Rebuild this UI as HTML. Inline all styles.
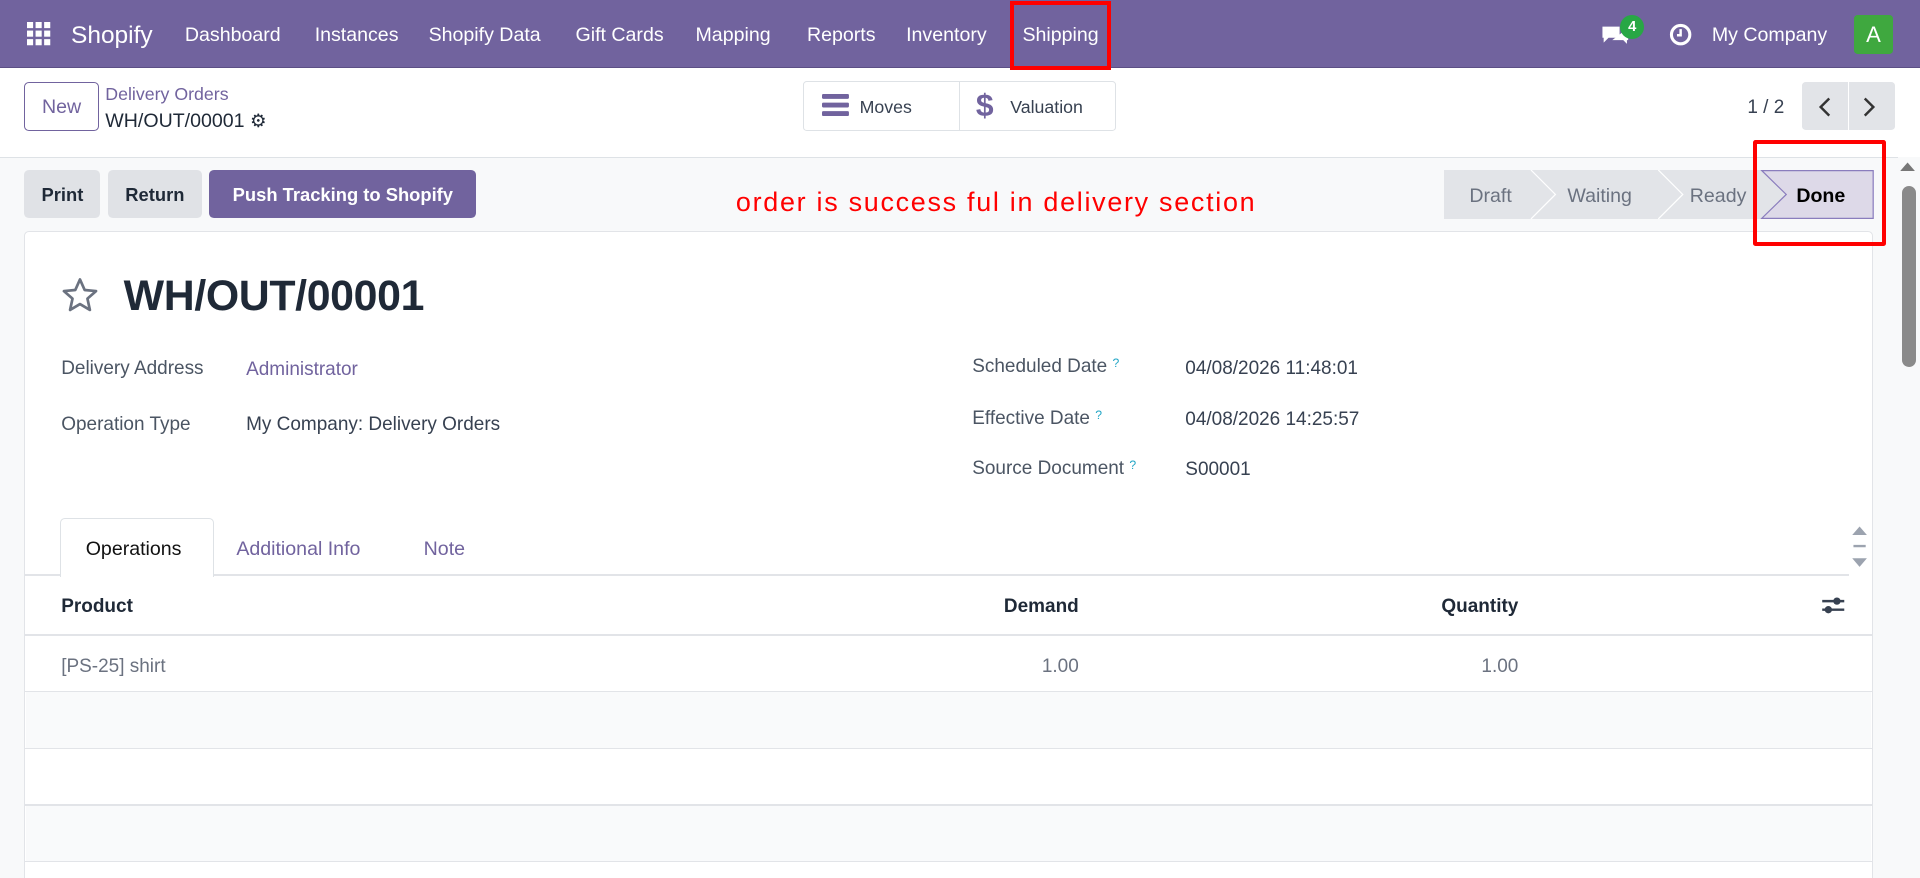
<!DOCTYPE html>
<html><head><meta charset="utf-8"><style>
html,body{margin:0;padding:0;width:1920px;height:878px;overflow:hidden;background:#fff}
#w{zoom:1.22449;width:1568px;height:717px;position:relative;font-family:"Liberation Sans",sans-serif;color:#374151;font-size:14.5px;overflow:hidden}
.a{position:absolute;white-space:nowrap}
.nav{left:0;top:0;width:1568px;height:55px;background:#71639e;border-bottom:1px solid #5c4f85}
.nv{color:#fff;font-size:16px;top:20px}
.btn{position:absolute;top:139px;height:39px;line-height:41px;border-radius:4px;background:#e0e2e6;color:#1f2937;font-weight:bold;font-size:15px;text-align:center}
.lbl{font-size:15.5px;color:#4b5563}
.val{font-size:15.5px;color:#374151}
.q{color:#22a6c6;font-size:10px;vertical-align:top}
.hr{position:absolute;left:20px;width:1509px;height:1px;background:#e2e4e8}
</style></head><body><div id="w">
<div class="a nav"></div>
<svg class="a" style="left:22px;top:18px" width="20" height="20"><g fill="#fff"><rect x="0" y="0" width="5" height="5"/><rect x="7" y="0" width="5" height="5"/><rect x="14" y="0" width="5" height="5"/><rect x="0" y="7" width="5" height="5"/><rect x="7" y="7" width="5" height="5"/><rect x="14" y="7" width="5" height="5"/><rect x="0" y="14" width="5" height="5"/><rect x="7" y="14" width="5" height="5"/><rect x="14" y="14" width="5" height="5"/></g></svg>
<div class="a" style="left:58px;top:18px;color:#fff;font-size:20px">Shopify</div>
<div class="a nv" style="left:151px">Dashboard</div>
<div class="a nv" style="left:257px">Instances</div>
<div class="a nv" style="left:350px">Shopify Data</div>
<div class="a nv" style="left:470px">Gift Cards</div>
<div class="a nv" style="left:568px">Mapping</div>
<div class="a nv" style="left:659px">Reports</div>
<div class="a nv" style="left:740px">Inventory</div>
<div class="a nv" style="left:835px">Shipping</div>
<div class="a" style="left:825px;top:1px;width:76px;height:50px;border:4px solid #f00"></div>
<svg class="a" style="left:1307px;top:19px" width="24" height="20"><path d="M2 3h14v9H7l-4 4v-4H2z" fill="#fff"/><path d="M10 14h9l3 3v-3h1V7h-4" fill="#fff"/></svg>
<div class="a" style="left:1323px;top:12px;width:20px;height:20px;border-radius:10px;background:#28a745;color:#fff;font-size:12px;font-weight:bold;text-align:center;line-height:20px">4</div>
<svg class="a" style="left:1363px;top:19px" width="19" height="19"><circle cx="9.5" cy="9.5" r="7.5" fill="none" stroke="#fff" stroke-width="2.5"/><path d="M9.5 5v5h-3" fill="none" stroke="#fff" stroke-width="2"/></svg>
<div class="a nv" style="left:1398px">My Company</div>
<div class="a" style="left:1514px;top:12px;width:32px;height:32px;background:#3fa83f;border-radius:3px;color:#fff;font-size:18px;text-align:center;line-height:32px">A</div>

<div class="a" style="left:20px;top:67px;width:59px;height:38px;border:1px solid #71639e;border-radius:4px;color:#71639e;font-size:16px;text-align:center;line-height:40px">New</div>
<div class="a" style="left:86px;top:69px;color:#71639e;font-size:14.5px">Delivery Orders</div>
<div class="a" style="left:86px;top:90px;color:#1f2937;font-size:16px">WH/OUT/00001 <span style="font-size:15px">⚙</span></div>
<div class="a" style="left:656px;top:66px;width:254px;height:39px;border:1px solid #dee2e6;border-radius:3px"></div>
<div class="a" style="left:783px;top:66px;width:1px;height:41px;background:#dee2e6"></div>
<svg class="a" style="left:671px;top:77px" width="22" height="18"><g fill="#71639e"><rect y="0" width="22" height="4" rx="1"/><rect y="7" width="22" height="4" rx="1"/><rect y="14" width="22" height="4" rx="1"/></g></svg>
<div class="a" style="left:702px;top:79px;font-size:14.5px;color:#374151">Moves</div>
<div class="a" style="left:797px;top:71px;font-size:26px;color:#71639e;font-weight:bold">$</div>
<div class="a" style="left:825px;top:79px;font-size:14.5px;color:#374151">Valuation</div>
<div class="a" style="left:1427px;top:79px;font-size:15.5px;color:#374151">1 / 2</div>
<div class="a" style="left:1472px;top:67px;width:37px;height:39px;background:#e2e4e8;border-radius:3px 0 0 3px"></div>
<div class="a" style="left:1510px;top:67px;width:38px;height:39px;background:#e2e4e8;border-radius:0 3px 3px 0"></div>
<svg class="a" style="left:1484px;top:78px" width="50" height="18"><path d="M10 2 3 9l7 7M39 2l7 7-7 7" fill="none" stroke="#333" stroke-width="2"/></svg>

<div class="a" style="left:0;top:128px;width:1568px;height:589px;background:#f8f9fa;border-top:1px solid #dee2e6"></div>
<div class="btn" style="left:20px;width:62px">Print</div>
<div class="btn" style="left:88px;width:77px">Return</div>
<div class="btn" style="left:171px;width:218px;background:#71639e;color:#fff">Push Tracking to Shopify</div>
<div class="a" style="left:601px;top:153px;color:#f00;font-size:22px;letter-spacing:1.4px">order is success ful in delivery section</div>
<svg class="a" style="left:1179px;top:139px" width="352" height="41">
<path d="M0 0H71l20 20-20 20H0z" fill="#e2e4e8"/>
<path d="M71 0H175l20 20-20 20H71l20-20z" fill="#e2e4e8"/>
<path d="M175 0H260l20 20-20 20H175l20-20z" fill="#e2e4e8"/>
<path d="M71 0l20 20-20 20M175 0l20 20-20 20" fill="none" stroke="#fff" stroke-width="1"/>
<path d="M259.5 .5H350.5V39.5H259.5l20-19.5z" fill="#ddd9e8" stroke="#8a7dbd"/>
</svg>
<div class="a" style="left:1200px;top:151px;font-size:16px;color:#6b7280">Draft</div>
<div class="a" style="left:1280px;top:151px;font-size:16px;color:#6b7280">Waiting</div>
<div class="a" style="left:1380px;top:151px;font-size:16px;color:#6b7280">Ready</div>
<div class="a" style="left:1467px;top:151px;font-size:16px;color:#000;font-weight:bold">Done</div>

<div class="a" style="left:20px;top:189px;width:1508px;height:540px;background:#fff;border:1px solid #e2e4e8;border-radius:4px"></div>
<div class="a" style="left:1432px;top:114px;width:102px;height:80px;border:4px solid #f00;border-radius:2px"></div>
<svg class="a" style="left:50px;top:226px" width="31" height="30"><path d="M15.5 2l3.8 8.6 9.3.9-7 6.2 2 9.2-8.1-4.8-8.1 4.8 2-9.2-7-6.2 9.3-.9z" fill="none" stroke="#6b7280" stroke-width="2.2" stroke-linejoin="round"/></svg>
<div class="a" style="left:101px;top:222px;font-size:35px;color:#1f2937;font-weight:bold;letter-spacing:-0.3px">WH/OUT/00001</div>
<div class="a lbl" style="left:50px;top:292px">Delivery Address</div>
<div class="a val" style="left:201px;top:293px;color:#71639e">Administrator</div>
<div class="a lbl" style="left:50px;top:338px">Operation Type</div>
<div class="a val" style="left:201px;top:338px">My Company: Delivery Orders</div>
<div class="a lbl" style="left:794px;top:291px">Scheduled Date <span class="q">?</span></div>
<div class="a val" style="left:968px;top:292px">04/08/2026 11:48:01</div>
<div class="a lbl" style="left:794px;top:333px">Effective Date <span class="q">?</span></div>
<div class="a val" style="left:968px;top:334px">04/08/2026 14:25:57</div>
<div class="a lbl" style="left:794px;top:374px">Source Document <span class="q">?</span></div>
<div class="a val" style="left:968px;top:375px">S00001</div>

<div class="hr" style="top:469px;width:1490px"></div>
<div class="a" style="left:49px;top:423px;width:124px;height:47px;background:#fff;border:1px solid #dee2e6;border-bottom:none;border-radius:4px 4px 0 0"></div>
<div class="a" style="left:70px;top:439px;font-size:16px;color:#111">Operations</div>
<div class="a" style="left:193px;top:439px;font-size:16px;color:#71639e">Additional Info</div>
<div class="a" style="left:346px;top:439px;font-size:16px;color:#71639e">Note</div>
<svg class="a" style="left:1512px;top:428px" width="14" height="38"><path d="M1 9 7 2l6 7z M2 17h10v2H2z M1 28h12l-6 7z" fill="#9ca3af"/></svg>
<div class="a" style="left:50px;top:487px;font-size:15.5px;font-weight:bold;color:#1f2937">Product</div>
<div class="a" style="left:781px;top:487px;width:100px;text-align:right;font-size:15.5px;font-weight:bold;color:#1f2937">Demand</div>
<div class="a" style="left:1140px;top:487px;width:100px;text-align:right;font-size:15.5px;font-weight:bold;color:#1f2937">Quantity</div>
<svg class="a" style="left:1487px;top:486px" width="20" height="17"><path d="M1 5h18M1 12h18" stroke="#374151" stroke-width="2"/><circle cx="13" cy="5" r="3" fill="#374151"/><circle cx="6" cy="12" r="3" fill="#374151"/></svg>
<div class="hr" style="top:518px"></div>
<div class="a" style="left:50px;top:536px;font-size:15.5px;color:#6b7280">[PS-25] shirt</div>
<div class="a" style="left:781px;top:536px;width:100px;text-align:right;font-size:15.5px;color:#6b7280">1.00</div>
<div class="a" style="left:1140px;top:536px;width:100px;text-align:right;font-size:15.5px;color:#6b7280">1.00</div>
<div class="hr" style="top:564px"></div>
<div class="a" style="left:21px;top:565px;width:1507px;height:46px;background:#f9fafb"></div>
<div class="hr" style="top:611px"></div>
<div class="hr" style="top:657px"></div>
<div class="a" style="left:21px;top:658px;width:1507px;height:45px;background:#f9fafb"></div>
<div class="hr" style="top:703px"></div>

<div class="a" style="left:1550px;top:128px;width:18px;height:589px;background:#f8f9fa"></div>
<svg class="a" style="left:1551px;top:131px" width="14" height="10"><path d="M1 9 7 2l6 7z" fill="#777"/></svg>
<div class="a" style="left:1553px;top:152px;width:12px;height:148px;background:#8a8a8a;border-radius:6px"></div>
</div></body></html>
